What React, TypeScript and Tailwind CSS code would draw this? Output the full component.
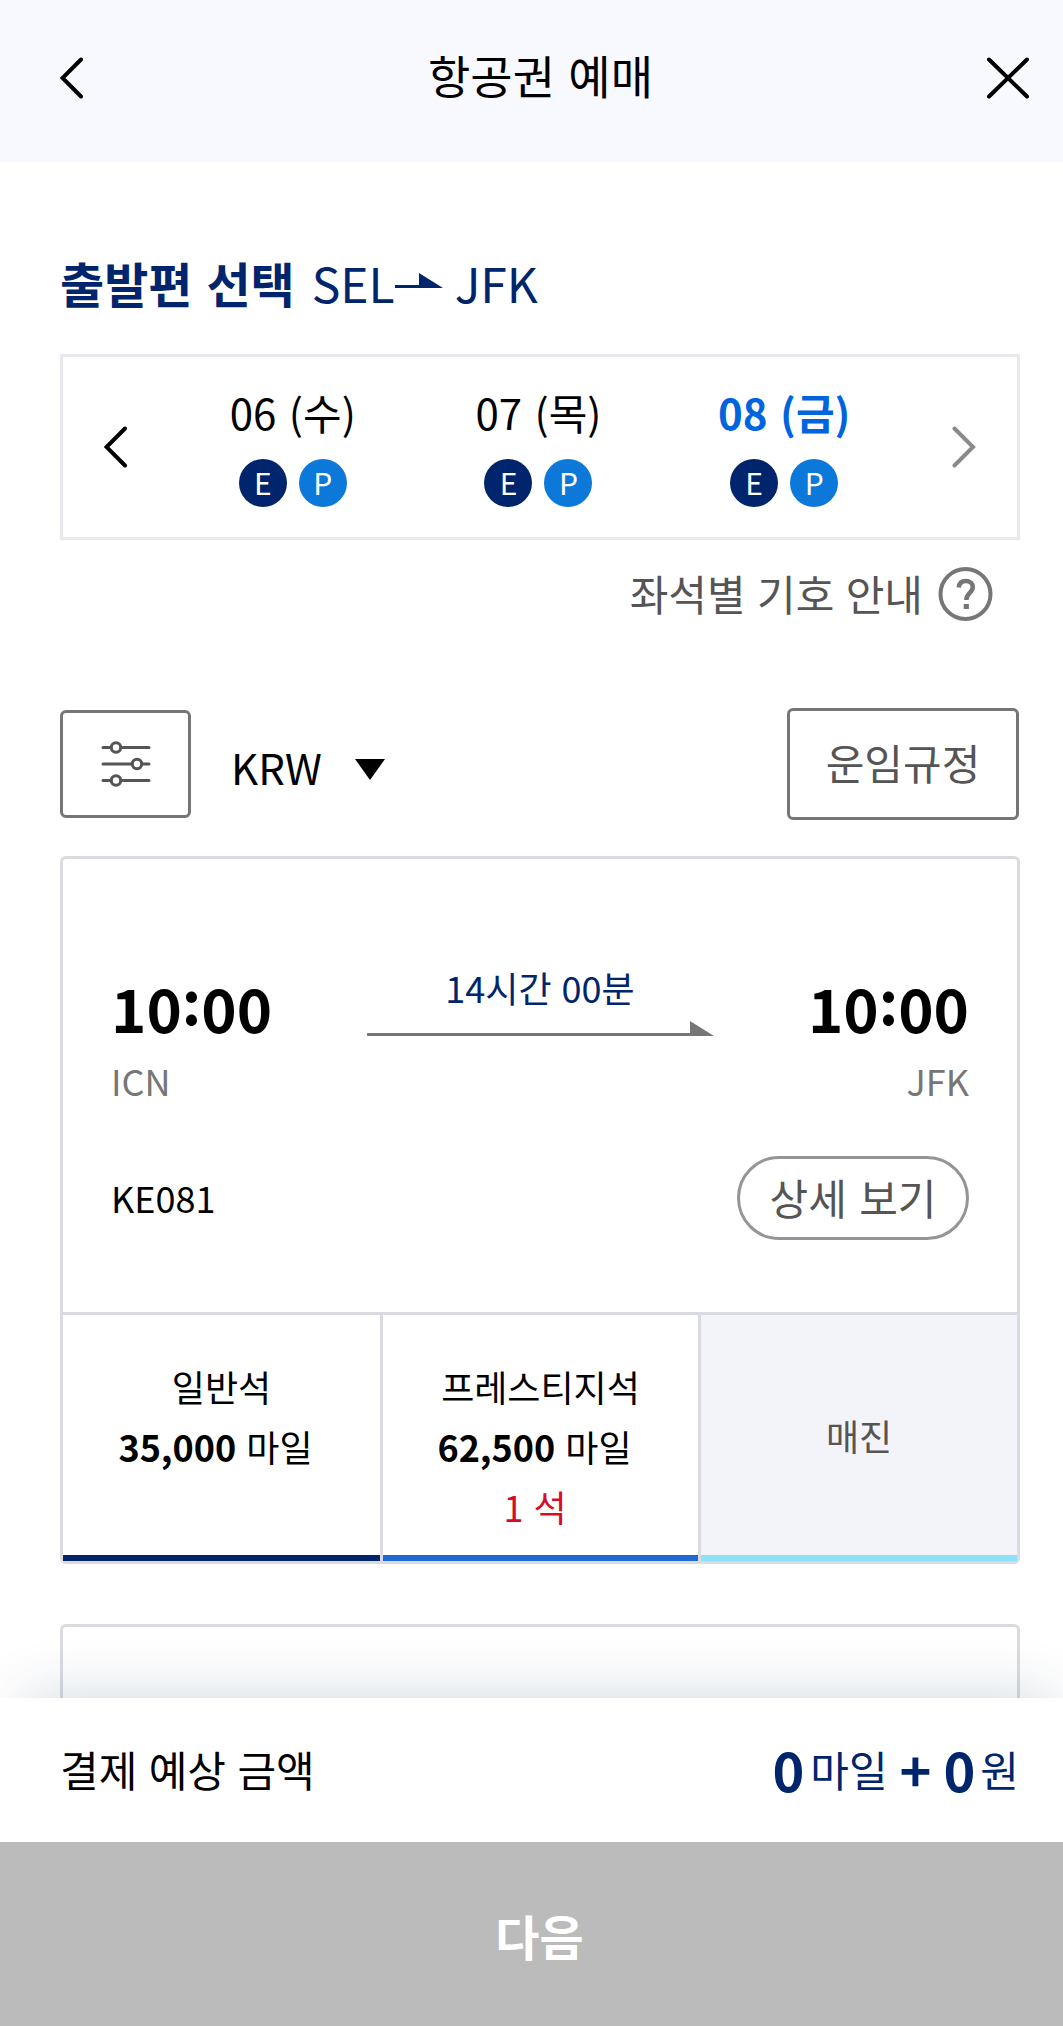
import React from "react";

const dates = [
  { label: "06 (수)", active: false },
  { label: "07 (목)", active: false },
  { label: "08 (금)", active: true },
];

function Chevron({ flip = false, color = "#000" }: { flip?: boolean; color?: string }) {
  return (
    <svg width="24" height="42" viewBox="0 0 24 42" fill="none" className="shrink-0">
      <path
        d={flip ? "M2.5 2.5 21 21 2.5 39.5" : "M21 2.5 2.5 21 21 39.5"}
        stroke={color}
        strokeWidth="4"
        strokeLinecap="round"
      />
    </svg>
  );
}

function Badge({ letter }: { letter: "E" | "P" }) {
  return (
    <span
      className={`flex h-12 w-12 items-center justify-center rounded-full pb-[2px] text-[30px] leading-[46px] text-white ${
        letter === "E" ? "bg-[#00256c]" : "bg-[#0c78da]"
      }`}
    >
      {letter}
    </span>
  );
}

function Header() {
  return (
    <header className="flex h-[162px] items-start justify-between bg-[#f8f9fe] pt-[57px] pr-[49px] pl-[60px]">
      <div className="w-[42px]">
        <Chevron />
      </div>
      <h1 className="-mt-[14px] -ml-[7px] text-[46px] leading-[62px]">항공권 예매</h1>
      <svg width="44" height="42" viewBox="0 0 44 42" fill="none">
        <path d="M3 2.5 41 39.5M41 2.5 3 39.5" stroke="#000" strokeWidth="4" strokeLinecap="round" />
      </svg>
    </header>
  );
}

function Time({ hour, minute }: { hour: string; minute: string }) {
  return (
    <div className="-mt-px text-[60px] leading-[80px] font-bold">
      {hour}
      <span className="inline-block -translate-y-[8px]">:</span>
      {minute}
    </div>
  );
}

function Miles({ amount }: { amount: string }) {
  return (
    <div className="pr-[12px]">
      <b>{amount}</b> 마일
    </div>
  );
}

export default function App() {
  return (
    <div className="h-[2026px] w-[1063px] overflow-hidden bg-white font-['Noto_Sans_CJK_KR',sans-serif] text-black [word-spacing:3px]">
      <div className="flex h-full w-[1079px] flex-col">
        <Header />

        <main className="h-[1536px] overflow-hidden px-[60px]">
          <div className="mt-[85px] flex h-[70px] text-[48px] leading-[70px] text-[#00256c]">
            <h2 className="font-bold">출발편 선택</h2>
            <span className="ml-[17px]">SEL</span>
            <svg width="48" height="16" viewBox="0 0 48 16" className="mt-[26px]">
              <path d="M0 12H24V0L48 15H0Z" fill="#00256c" />
            </svg>
            <span className="ml-[12px]">JFK</span>
          </div>

          <section className="mt-[37px] flex h-[186px] w-[960px] items-center border-[3px] border-[#e7e9ef] px-[41px]">
            <Chevron />
            <div className="-mt-[7px] mr-[45px] ml-[42px] grid flex-1 grid-cols-3">
              {dates.map((d) => (
                <div key={d.label} className="flex flex-col items-center">
                  <div
                    className={
                      d.active
                        ? "text-[42px] leading-[62px] font-bold text-[#0064de]"
                        : "text-[42px] leading-[62px]"
                    }
                  >
                    {d.label}
                  </div>
                  <div className="mt-4 flex gap-3">
                    <Badge letter="E" />
                    <Badge letter="P" />
                  </div>
                </div>
              ))}
            </div>
            <Chevron flip color="#8a8a8a" />
          </section>

          <div className="mt-[26px] mr-[26px] flex h-[56px] items-center justify-end gap-[15px]">
            <span className="mb-[2px] text-[42px] leading-[56px] text-[#555] [word-spacing:2px]">좌석별 기호 안내</span>
            <svg width="55" height="56" viewBox="0 0 55 56" fill="none" stroke="#767676">
              <circle cx="27.5" cy="28" r="25" strokeWidth="4" />
              <path
                d="M20.7 21.5C21.2 17.3 24 15 27.8 15C32 15 34.8 17.5 34.8 21.2C34.8 26.5 28.3 27.3 28.3 34"
                strokeWidth="4.5"
              />
              <path d="M25.7 40.5H30.9" strokeWidth="5" />
            </svg>
          </div>

          <div className="mt-[86px] flex h-[112px] items-center">
            <button className="flex h-[108px] w-[131px] items-center justify-center rounded-[6px] border-[3px] border-[#767676]">
              <svg width="50" height="46" viewBox="0 0 50 46" fill="none" stroke="#555" strokeWidth="3" strokeLinecap="round">
                <path d="M2 6.5H10M20 6.5H48M2 23H31M41 23H48M2 39.5H10M20 39.5H48" />
                <circle cx="15" cy="6.5" r="4.7" />
                <circle cx="36" cy="23" r="4.7" />
                <circle cx="15" cy="39.5" r="4.7" />
              </svg>
            </button>
            <span className="mt-[5px] ml-[40px] text-[42px] leading-[62px]">KRW</span>
            <svg width="30" height="21" viewBox="0 0 30 21" className="mt-[11px] ml-[33px]">
              <path d="M0 0H30L15 21Z" />
            </svg>
            <button className="ml-auto h-[112px] w-[232px] rounded-[6px] border-[3px] border-[#767676] pb-[6px] text-[42px] text-[#555]">
              운임규정
            </button>
          </div>

          <article className="mt-[36px] flex h-[708px] w-[960px] flex-col rounded-[6px] border-[3px] border-[#d9dbe1]">
            <div className="flex-1 px-[48px] pt-[109px]">
              <div className="flex justify-between">
                <div>
                  <Time hour="10" minute="00" />
                  <div className="mt-2 text-[36px] leading-[50px] text-[#767676]">ICN</div>
                </div>
                <div className="-mt-[7px] flex flex-col items-center">
                  <div className="text-[36px] leading-[52px] text-[#00256c] [word-spacing:2px]">14시간 00분</div>
                  <svg width="348" height="16" viewBox="0 0 348 16" className="mt-2">
                    <path d="M1.5 12H324V0L348 15H1.5Q0 13.5 1.5 12Z" fill="#767676" />
                  </svg>
                </div>
                <div className="text-right">
                  <Time hour="10" minute="00" />
                  <div className="mt-2 text-[36px] leading-[50px] text-[#767676]">JFK</div>
                </div>
              </div>
              <div className="mt-[51px] flex items-center justify-between">
                <span className="pb-[2px] text-[36px] leading-[52px]">KE081</span>
                <button className="h-[84px] w-[232px] rounded-full border-[3px] border-[#959595] pb-[3px] text-[42px] leading-[62px] text-[#555] [word-spacing:3px]">
                  상세 보기
                </button>
              </div>
            </div>
            <div className="grid h-[249px] grid-cols-[320px_318px_316px] border-t-[3px] border-[#d9dbe1] text-center text-[36px] leading-[60px] [word-spacing:2px]">
              <div className="border-r-[3px] border-[#d9dbe1]">
                <div className="h-[240px] pt-[41px]">
                  <div>일반석</div>
                  <Miles amount="35,000" />
                </div>
                <div className="h-[6px] bg-[#00256c]" />
              </div>
              <div className="border-r-[3px] border-[#d9dbe1]">
                <div className="h-[240px] pt-[41px]">
                  <div>프레스티지석</div>
                  <Miles amount="62,500" />
                  <div className="pr-[11px] text-[#d60c2b]">1 석</div>
                </div>
                <div className="h-[6px] bg-[#2168d2]" />
              </div>
              <div className="bg-[#f3f4f9]">
                <div className="h-[240px] pt-[90px] text-[#555]">매진</div>
                <div className="h-[6px] bg-[#8de0f8]" />
              </div>
            </div>
          </article>

          <article className="mt-[60px] h-[200px] w-[960px] rounded-[6px] border-[3px] border-[#d9dbe1]" />
        </main>

        <footer className="relative shrink-0 bg-white shadow-[0_-24px_56px_-24px_rgba(0,50,90,0.19)]">
          <div className="flex h-[144px] items-center justify-between px-[60px] pb-[2px]">
            <span className="text-[42px] leading-[62px] [word-spacing:2px]">결제 예상 금액</span>
            <div className="flex items-center text-[42px] leading-[62px] text-[#00256c]">
              <b className="text-[54px]">0</b>
              <span className="ml-[6px]">마일</span>
              <b className="mx-[12px] text-[54px]">+</b>
              <b className="text-[54px]">0</b>
              <span className="ml-[5px]">원</span>
            </div>
          </div>
          <button className="block h-[184px] w-full bg-[#bbb] pt-[2px] text-[48px] font-bold text-white">다음</button>
        </footer>
      </div>
    </div>
  );
}
